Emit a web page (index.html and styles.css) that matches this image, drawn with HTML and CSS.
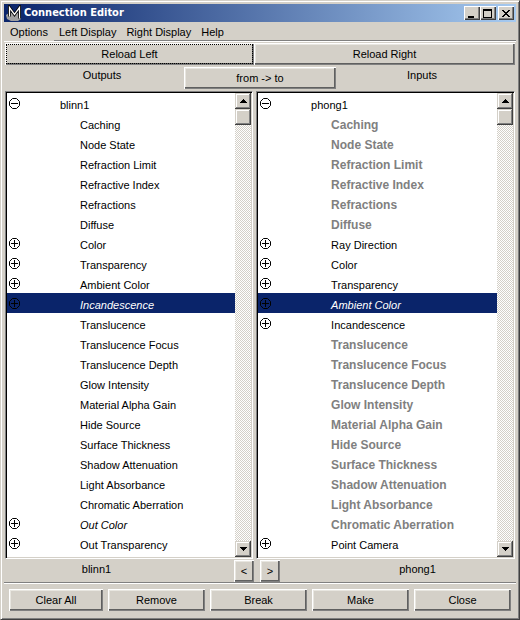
FILE: index.html
```html
<!DOCTYPE html>
<html lang="en">
<head>
    <meta charset="UTF-8">
    <meta name="viewport" content="width=device-width, initial-scale=1.0">
    <title>Connection Editor</title>
    <link rel="stylesheet" href="styles.css">
</head>
<body>
    <svg class="defs" aria-hidden="true">
        <symbol id="plus" viewBox="0 0 11 11">
            <path d="M3.5 .5h4l3 3v4l-3 3h-4l-3-3v-4zM5.5 2v7M2 5.5h7" fill="none" stroke="#000"/>
        </symbol>
        <symbol id="minus" viewBox="0 0 11 11">
            <path d="M3.5 .5h4l3 3v4l-3 3h-4l-3-3v-4zM2 5.5h7" fill="none" stroke="#000"/>
        </symbol>
        <symbol id="up" viewBox="0 0 7 4">
            <path d="M3 0h1v1h1v1h1v1h1v1H0V3h1V2h1V1h1z"/>
        </symbol>
        <symbol id="down" viewBox="0 0 7 4">
            <path d="M0 0h7v1H6v1H5v1H4v1H3V3H2V2H1V1H0z"/>
        </symbol>
    </svg>

    <div class="window">
        <header class="titlebar">
            <svg class="logo" width="16" height="16" viewBox="0 0 16 16" aria-hidden="true">
                <path d="M0 10l3-2h9l3 3v3l-3 2H5l-4-2z" fill="#a0a0a0"/>
                <path d="M3.5 11.5v-9l5 7 5-7v11" fill="none" stroke="#000" stroke-width="3"/>
                <path d="M3.5 11.5v-9l5 7 5-7v11" fill="none" stroke="#fff" stroke-width="1.3"/>
            </svg>
            <h1>Connection Editor</h1>
            <button class="caption" aria-label="Minimize"><svg width="10" height="9"><path d="M1 7h6v2H1z"/></svg></button>
            <button class="caption" aria-label="Maximize"><svg width="10" height="9"><path d="M0 0h9v9H0zM1 2v6h7V2z" fill-rule="evenodd"/></svg></button>
            <button class="caption close" aria-label="Close window"><svg width="10" height="9"><path d="M1 1h2v1h1v1h2V2h1V1h2v1H8v1H7v1H6v1h1v1h1v1h1v1H7V7H6V6H4v1H3v1H1V7h1V6h1V5h1V4H3V3H2V2H1z"/></svg></button>
        </header>

        <nav class="menu">
            <button class="open">Options</button>
            <button>Left Display</button>
            <button>Right Display</button>
            <button>Help</button>
        </nav>

        <div class="reload">
            <button class="btn focused">Reload Left</button>
            <button class="btn">Reload Right</button>
        </div>

        <div class="direction">
            <h2 class="outputs">Outputs</h2>
            <button class="btn">from -&gt; to</button>
            <h2 class="inputs">Inputs</h2>
        </div>

        <main class="panes">
            <section class="pane">
                <ul class="tree">
                    <li class="root"><svg><use href="#minus"/></svg>blinn1</li>
                    <li>Caching</li>
                    <li>Node State</li>
                    <li>Refraction Limit</li>
                    <li>Refractive Index</li>
                    <li>Refractions</li>
                    <li>Diffuse</li>
                    <li><svg><use href="#plus"/></svg>Color</li>
                    <li><svg><use href="#plus"/></svg>Transparency</li>
                    <li><svg><use href="#plus"/></svg>Ambient Color</li>
                    <li class="connected selected"><svg><use href="#plus"/></svg>Incandescence</li>
                    <li>Translucence</li>
                    <li>Translucence Focus</li>
                    <li>Translucence Depth</li>
                    <li>Glow Intensity</li>
                    <li>Material Alpha Gain</li>
                    <li>Hide Source</li>
                    <li>Surface Thickness</li>
                    <li>Shadow Attenuation</li>
                    <li>Light Absorbance</li>
                    <li>Chromatic Aberration</li>
                    <li class="connected"><svg><use href="#plus"/></svg>Out Color</li>
                    <li><svg><use href="#plus"/></svg>Out Transparency</li>
                </ul>
                <div class="scrollbar">
                    <button aria-label="Scroll up"><svg><use href="#up"/></svg></button>
                    <div class="thumb"></div>
                    <button class="end" aria-label="Scroll down"><svg><use href="#down"/></svg></button>
                </div>
            </section>

            <section class="pane">
                <ul class="tree">
                    <li class="root"><svg><use href="#minus"/></svg>phong1</li>
                    <li class="disabled">Caching</li>
                    <li class="disabled">Node State</li>
                    <li class="disabled">Refraction Limit</li>
                    <li class="disabled">Refractive Index</li>
                    <li class="disabled">Refractions</li>
                    <li class="disabled">Diffuse</li>
                    <li><svg><use href="#plus"/></svg>Ray Direction</li>
                    <li><svg><use href="#plus"/></svg>Color</li>
                    <li><svg><use href="#plus"/></svg>Transparency</li>
                    <li class="connected selected"><svg><use href="#plus"/></svg>Ambient Color</li>
                    <li><svg><use href="#plus"/></svg>Incandescence</li>
                    <li class="disabled">Translucence</li>
                    <li class="disabled">Translucence Focus</li>
                    <li class="disabled">Translucence Depth</li>
                    <li class="disabled">Glow Intensity</li>
                    <li class="disabled">Material Alpha Gain</li>
                    <li class="disabled">Hide Source</li>
                    <li class="disabled">Surface Thickness</li>
                    <li class="disabled">Shadow Attenuation</li>
                    <li class="disabled">Light Absorbance</li>
                    <li class="disabled">Chromatic Aberration</li>
                    <li><svg><use href="#plus"/></svg>Point Camera</li>
                </ul>
                <div class="scrollbar">
                    <button aria-label="Scroll up"><svg><use href="#up"/></svg></button>
                    <div class="thumb"></div>
                    <button class="end" aria-label="Scroll down"><svg><use href="#down"/></svg></button>
                </div>
            </section>
        </main>

        <div class="nodes">
            <div class="node left">
                <span>blinn1</span>
                <button class="btn">&lt;</button>
            </div>
            <div class="node right">
                <button class="btn">&gt;</button>
                <span>phong1</span>
            </div>
        </div>

        <footer class="actions">
            <button class="btn">Clear All</button>
            <button class="btn">Remove</button>
            <button class="btn">Break</button>
            <button class="btn">Make</button>
            <button class="btn">Close</button>
        </footer>
    </div>
</body>
</html>
```

FILE: styles.css
```css
*{ box-sizing: border-box; }
body{
    margin: 0;
    background: #d4d0c8;
    color: #000;
    font-family: "Liberation Sans", Arial, sans-serif;
    font-size: 11px;
    line-height: 14px;
}
h1, h2, ul{
    margin: 0;
    padding: 0;
    font-size: inherit;
    font-weight: normal;
}
button{
    margin: 0;
    padding: 0;
    border: 0;
    border-radius: 0;
    background: #d4d0c8;
    color: inherit;
    font: inherit;
}
svg{ display: block; }
.defs{
    position: absolute;
    width: 0;
    height: 0;
}

/* window frame */
.window{
    min-height: 100vh;
    display: flex;
    flex-direction: column;
    padding: 3px;
    border: 1px solid #d4d0c8;
    border-right-color: #404040;
    border-bottom-color: #404040;
    box-shadow: inset 1px 1px #fff, inset -1px -1px #808080;
}
.titlebar{
    display: flex;
    align-items: center;
    height: 18px;
    padding: 0 2px;
    background: linear-gradient(to right, #0a246a, #a6caf0);
}
.logo{ width: 16px; }
h1{
    flex: 1;
    padding-left: 2px;
    color: #fff;
    font: bold 11px/14px "DejaVu Sans Condensed", "DejaVu Sans", sans-serif;
}
.caption{
    display: flex;
    align-items: center;
    justify-content: center;
    width: 16px;
    height: 14px;
    box-shadow: inset 1px 1px #fff, inset -1px -1px #404040, inset -2px -2px #808080;
}
.close{ margin-left: 2px; }

.menu{
    display: flex;
    height: 20px;
    border-bottom: 1px solid #fff;
    box-shadow: inset 0 -1px #808080;
}
.menu button{
    padding: 0 5px;
    background: none;
}
.menu .open{
    padding: 0 6px;
    background: #d4d0c8;
}

.btn{
    height: 22px;
    box-shadow: inset 1px 1px #fff, inset -1px -1px #808080, inset -2px -2px #606060, inset 2px 2px #e8e6e0;
}
.reload{
    display: flex;
    padding: 1px 1px 0;
}
.reload .btn{ flex: 261; }
.reload .focused{
    flex: 249;
    outline: 1px dotted #000;
    outline-offset: -2px;
}

.direction{
    display: grid;
    grid-template-columns: 1fr 152px 1fr;
    align-items: center;
    padding: 2px 0;
    text-align: center;
}
.direction h2{ padding-bottom: 6px; }
.outputs{ padding-left: 16px; }
.inputs{ padding-right: 8px; }

/* attribute lists */
.panes{
    flex: 1;
    display: flex;
    gap: 3px;
    padding: 0 1px;
}
.pane{
    flex: 259;
    display: flex;
    border: 1px solid;
    border-color: #808080 #fff #fff #808080;
    background: #fff;
    box-shadow: inset 1px 1px #000, inset -1px -1px #d4d0c8;
    padding: 1px;
}
.pane:first-child{ flex: 248; }
.tree{
    flex: 1;
    list-style: none;
}
.tree li{
    position: relative;
    height: 20px;
    padding-left: 73px;
    line-height: 24px;
    white-space: nowrap;
}
.tree .root{ padding-left: 53px; }
.tree svg{
    position: absolute;
    left: 2px;
    top: 5px;
    width: 11px;
    height: 11px;
}
.tree .disabled{
    color: #808080;
    font-size: 12px;
    font-weight: bold;
}
.tree .connected{ font-style: italic; }
.tree .selected{
    background: #0a246a;
    color: #fff;
}
.scrollbar{
    width: 16px;
    display: flex;
    flex-direction: column;
    background: repeating-conic-gradient(#fff 0 25%, #d4d0c8 0 50%) 0 0 / 2px 2px;
}
.scrollbar button, .thumb{
    height: 16px;
    background: #d4d0c8;
    box-shadow: inset -1px -1px #404040, inset 1px 1px #d4d0c8, inset -2px -2px #808080, inset 2px 2px #fff;
}
.scrollbar .end{ margin-top: auto; }
.scrollbar svg{
    width: 7px;
    height: 4px;
    margin: 0 auto;
}

.nodes{
    display: flex;
    gap: 6px;
    padding: 1px 1px 0;
}
.node{
    display: flex;
    text-align: center;
}
.node span{
    flex: 1;
    padding-top: 2px;
}
.node .btn{ width: 20px; }
.left{ flex: 249; }
.right{ flex: 255; }
.left span{ padding-right: 46px; }
.right span{ padding-left: 40px; }

.actions{
    display: flex;
    gap: 5px;
    padding: 6px 5px 5px;
    border-top: 1px solid #808080;
    box-shadow: inset 0 1px #fff;
}
.actions .btn{ flex: 97; }
.actions .btn:first-child{ flex: 94; }
```
